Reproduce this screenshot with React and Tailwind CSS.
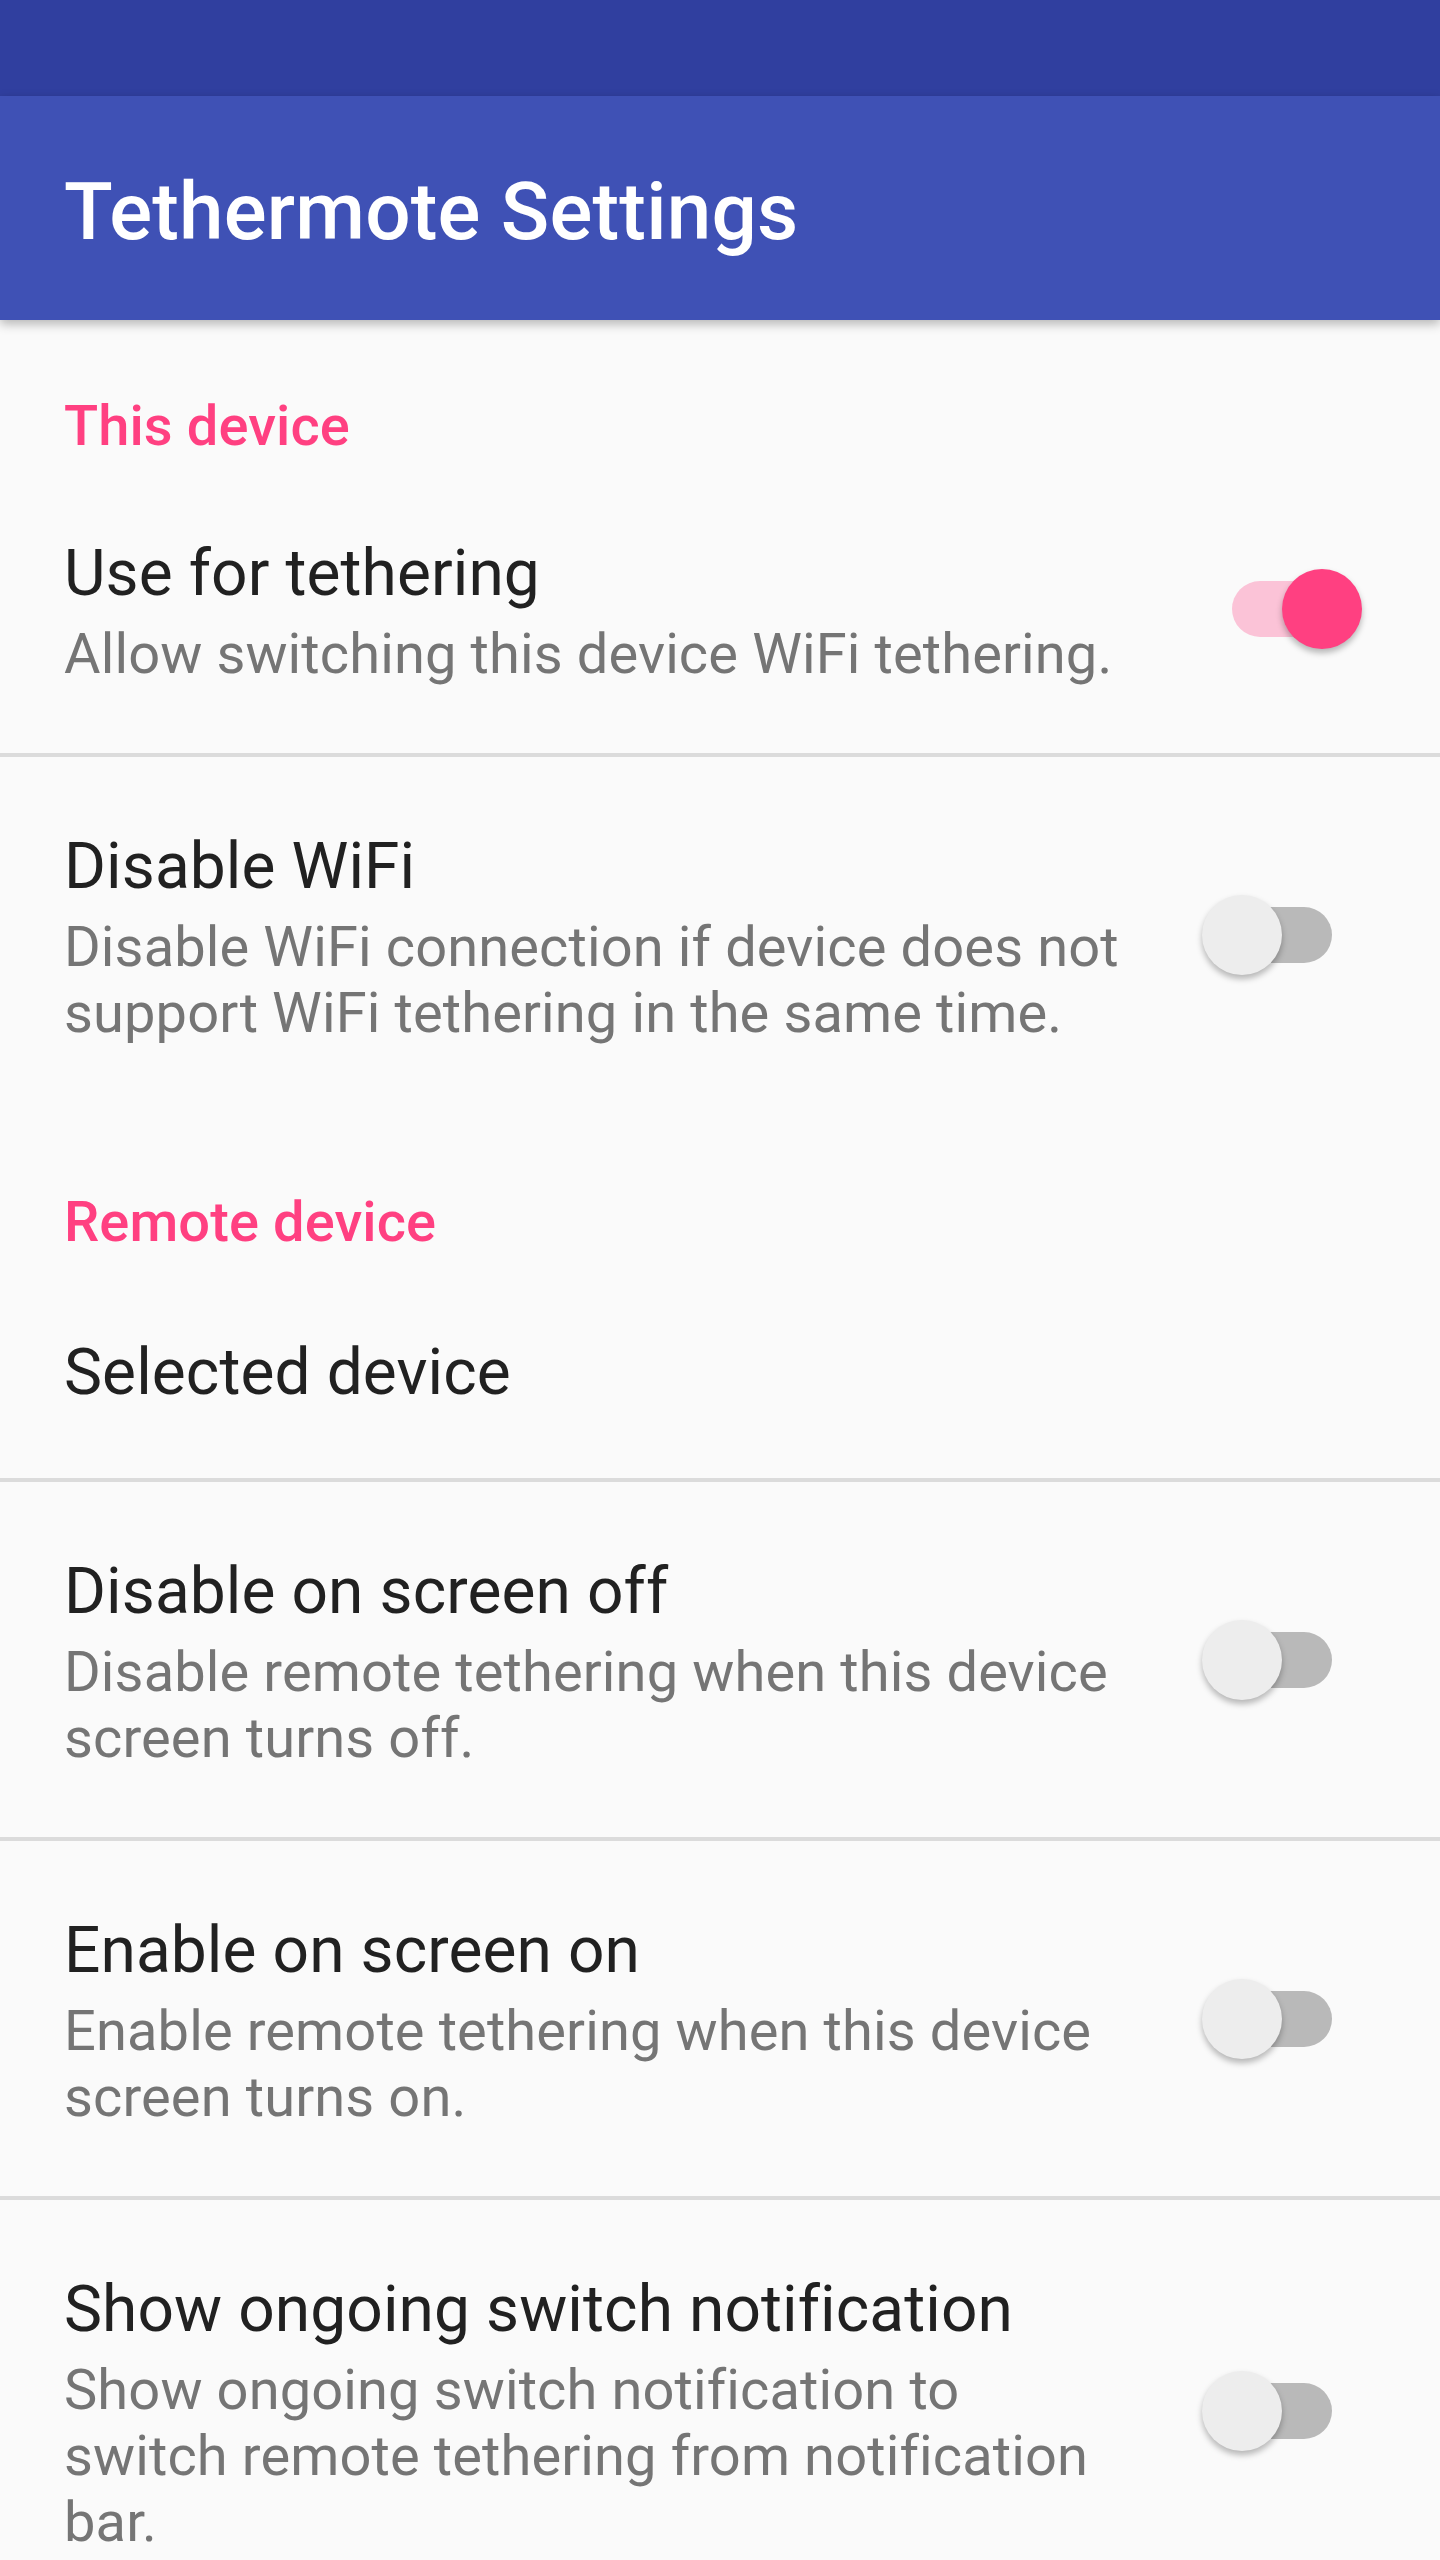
import React from "react";

function Switch({ on }) {
  return (
    <div className="relative w-[160px] h-[80px] shrink-0">
      <div
        className={
          "absolute left-[30px] top-[12px] w-[100px] h-[56px] rounded-full " +
          (on ? "bg-[#FBC3D7]" : "bg-[#B9B9B9]")
        }
      />
      <div
        className={
          "absolute top-0 w-[80px] h-[80px] rounded-full shadow-[0_4px_6px_rgba(0,0,0,0.28)] " +
          (on ? "left-[80px] bg-[#FF4081]" : "left-0 bg-[#EDEDED]")
        }
      />
    </div>
  );
}

function Category({ children, pt }) {
  return (
    <div className={"pl-[64px] " + (pt ? "pt-[77px] pb-[2px]" : "pt-[73px] pb-[5px]")}>
      <div className="text-[56px] leading-[66px] font-medium text-[#FF4081] tracking-[0.1px]">{children}</div>
    </div>
  );
}

function Item({ title, summary, on }) {
  return (
    <div className="flex items-center pl-[64px] pr-[78px]">
      <div className="flex-1 pt-[72px] pb-[66px]">
        <div className="text-[64px] leading-[75px] text-[#212121] tracking-[0.1px]">{title}</div>
        <div className="mt-[10px] text-[56px] leading-[66px] text-[#757575] tracking-[0.12px]">{summary}</div>
      </div>
      <div className="ml-[76px]">
        <Switch on={on} />
      </div>
    </div>
  );
}

function Divider() {
  return <div className="h-[4px] bg-[#DBDBDB]" />;
}

export default function App() {
  return (
    <div
      className="w-[1440px] h-[2560px] overflow-hidden bg-[#FAFAFA]"
      style={{ fontFamily: "Roboto, 'Noto Sans', sans-serif" }}
    >
      <div className="h-[96px] bg-[#303F9F]" />
      <div className="relative z-10 h-[224px] bg-[#3F51B5] pl-[64px] pt-[69px] shadow-[0_4px_10px_rgba(0,0,0,0.28)]">
        <div className="text-[80px] leading-[94px] font-medium text-white tracking-[0.2px]">Tethermote Settings</div>
      </div>

      <Category>This device</Category>
      <Item
        title="Use for tethering"
        summary="Allow switching this device WiFi tethering."
        on
      />
      <Divider />
      <Item
        title="Disable WiFi"
        summary="Disable WiFi connection if device does not support WiFi tethering in the same time."
      />

      <Category pt>Remote device</Category>
      <div className="h-[221px] pl-[64px] pt-[78px]">
        <div className="text-[64px] leading-[75px] text-[#212121] tracking-[0.1px]">Selected device</div>
      </div>
      <Divider />
      <Item
        title="Disable on screen off"
        summary="Disable remote tethering when this device screen turns off."
      />
      <Divider />
      <Item
        title="Enable on screen on"
        summary="Enable remote tethering when this device screen turns on."
      />
      <Divider />
      <Item
        title="Show ongoing switch notification"
        summary="Show ongoing switch notification to switch remote tethering from notification bar."
      />
    </div>
  );
}
